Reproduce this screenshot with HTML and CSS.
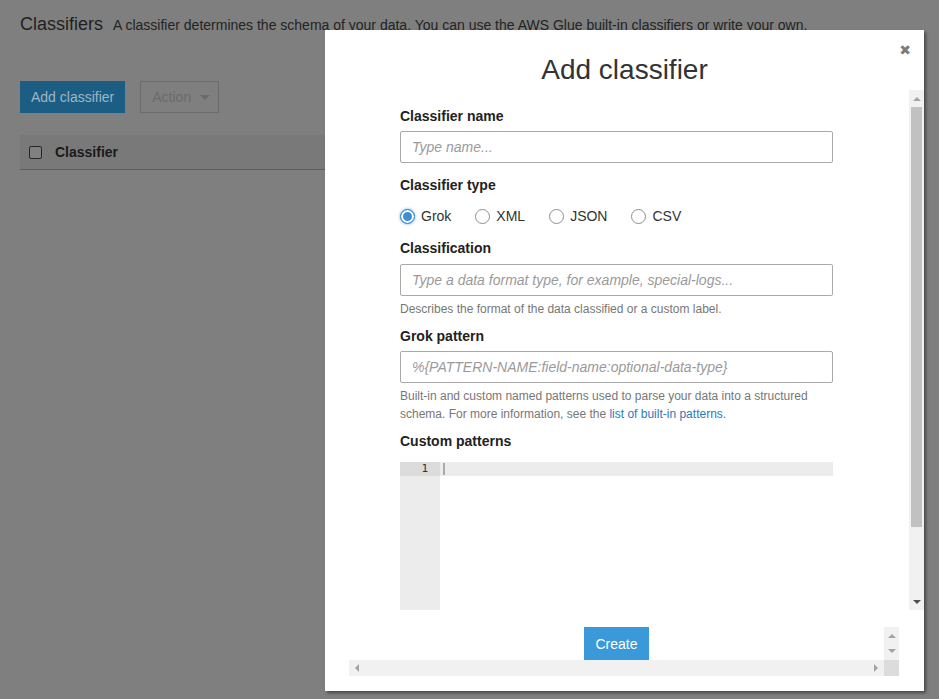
FILE: index.html
```html
<!DOCTYPE html>
<html lang="en">
<head>
<meta charset="utf-8">
<title>Add classifier</title>
<link rel="stylesheet" href="styles.css">
</head>
<body>
<div class="page">
  <header class="page-head">
    <h1 class="page-title">Classifiers</h1>
    <span class="page-desc">A classifier determines the schema of your data. You can use the AWS Glue built-in classifiers or write your own.</span>
  </header>
  <div class="toolbar">
    <button class="btn-add">Add classifier</button>
    <button class="btn-action">Action <span class="caret"></span></button>
  </div>
  <div class="table-head">
    <span class="checkbox"></span>
    <span class="col-title">Classifier</span>
  </div>
</div>

<div class="modal">
  <button class="close">&#x2716;</button>
  <h2 class="modal-title">Add classifier</h2>
  <div class="modal-body">
    <div class="scroll-view">
      <form class="form">
        <label class="field-label">Classifier name</label>
        <div class="input input-1"><span class="ph">Type name...</span></div>

        <label class="field-label lbl-type">Classifier type</label>
        <div class="radios">
          <span class="radio-opt"><span class="radio checked"></span>Grok</span>
          <span class="radio-opt"><span class="radio"></span>XML</span>
          <span class="radio-opt"><span class="radio"></span>JSON</span>
          <span class="radio-opt"><span class="radio"></span>CSV</span>
        </div>

        <label class="field-label lbl-class">Classification</label>
        <div class="input input-2"><span class="ph">Type a data format type, for example, special-logs...</span></div>
        <p class="help">Describes the format of the data classified or a custom label.</p>

        <label class="field-label lbl-grok">Grok pattern</label>
        <div class="input input-3"><span class="ph">%{PATTERN-NAME:field-name:optional-data-type}</span></div>
        <p class="help">Built-in and custom named patterns used to parse your data into a structured<br>schema. For more information, see the <a class="link">list of built-in patterns.</a></p>

        <label class="field-label lbl-custom">Custom patterns</label>
        <div class="editor">
          <div class="gutter"><div class="gutter-active">1</div></div>
          <div class="code"><div class="code-active"><span class="cursor"></span></div></div>
        </div>
      </form>
    </div>
    <div class="vscroll">
      <div class="sb-btn"><span class="tri-up dim"></span></div>
      <div class="sb-track"><div class="sb-thumb"></div></div>
      <div class="sb-btn"><span class="tri-down dark"></span></div>
    </div>
  </div>
  <div class="modal-foot">
    <div class="foot-row">
      <div class="foot-view"><button class="btn-create">Create</button></div>
      <div class="foot-vscroll">
        <span class="tri-up dim"></span>
        <span class="tri-down dim"></span>
      </div>
    </div>
    <div class="foot-row">
      <div class="foot-hscroll">
        <span class="tri-left dim"></span>
        <span class="tri-right dim"></span>
      </div>
      <div class="foot-corner"></div>
    </div>
  </div>
</div>
</body>
</html>
```

FILE: styles.css
```css
* { box-sizing: border-box; }

html, body {
  margin: 0;
  padding: 0;
}

body {
  width: 939px;
  height: 699px;
  overflow: hidden;
  background: #7f7f7f;
  font-family: "Liberation Sans", Arial, sans-serif;
  position: relative;
}

.page {
  padding: 12px 20px 0;
}

.page-head {
  display: flex;
  align-items: baseline;
  height: 24px;
}

.page-title {
  margin: 0;
  font-size: 18px;
  line-height: 24px;
  font-weight: normal;
  color: #1f1f1f;
}

.page-desc {
  margin-left: 10px;
  font-size: 14px;
  color: #232323;
}

.toolbar {
  margin-top: 45px;
  display: flex;
  gap: 15px;
}

.btn-add {
  height: 32px;
  padding: 0 11px;
  border: none;
  background: #1c5d84;
  color: #9eb6c6;
  font: 14px "Liberation Sans", Arial, sans-serif;
}

.btn-action {
  height: 32px;
  width: 79px;
  padding: 0 0 0 11px;
  border: 1px solid #6c6c6c;
  background: transparent;
  color: #6a6a6a;
  font: 14px "Liberation Sans", Arial, sans-serif;
  display: flex;
  align-items: center;
  gap: 6px;
}

.caret {
  width: 0;
  height: 0;
  border-left: 5px solid transparent;
  border-right: 5px solid transparent;
  border-top: 5px solid #6a6a6a;
  margin-left: 3px;
}

.table-head {
  margin-top: 22px;
  height: 35px;
  background: #797979;
  border-bottom: 1px solid #5c5c5c;
  display: flex;
  align-items: center;
  padding-left: 9px;
}

.checkbox {
  width: 13px;
  height: 13px;
  border: 1px solid #262626;
  border-radius: 2px;
  background: #808080;
}

.col-title {
  margin-left: 13px;
  font-weight: bold;
  font-size: 14px;
  color: #1a1a1a;
}

/* modal */
.modal {
  position: absolute;
  left: 325px;
  top: 30px;
  width: 599px;
  height: 661px;
  background: #fff;
  box-shadow: 2px 2px 3px rgba(0, 0, 0, 0.45);
}

.close {
  position: absolute;
  right: 13px;
  top: 12px;
  border: none;
  background: none;
  padding: 0;
  font-size: 14px;
  line-height: 16px;
  color: #7b7b7b;
  font-family: "DejaVu Sans", sans-serif;
}

.modal-title {
  margin: 0;
  padding-top: 20px;
  height: 60px;
  font-size: 28px;
  line-height: 40px;
  font-weight: normal;
  color: #333;
  text-align: center;
}

.modal-body {
  margin-left: 24px;
  width: 575px;
  height: 520px;
  display: flex;
}

.scroll-view {
  flex: 1;
  overflow: hidden;
}

.form {
  margin: 0 0 0 51px;
  width: 433px;
  padding: 16px 0 40px;
  display: flex;
  flex-direction: column;
}

.field-label {
  font-weight: bold;
  font-size: 14px;
  line-height: 20px;
  color: #222;
}

.lbl-type { margin-top: 12px; }
.lbl-class { margin-top: 11px; }
.lbl-grok { margin-top: 8px; }
.lbl-custom { margin-top: 8px; }

.input {
  height: 32px;
  border: 1px solid #aaa;
  border-radius: 2px;
  padding: 0 11px;
  display: flex;
  align-items: center;
}

.input-1 { margin-top: 5px; }
.input-2 { margin-top: 6px; }
.input-3 { margin-top: 5px; }

.ph {
  font-style: italic;
  font-size: 14px;
  color: #9a9a9a;
}

.radios {
  margin-top: 10px;
  height: 22px;
  display: flex;
  align-items: center;
  gap: 24px;
}

.radio-opt {
  display: flex;
  align-items: center;
  gap: 6px;
  font-size: 14px;
  color: #333;
}

.radio {
  width: 15px;
  height: 15px;
  border-radius: 50%;
  border: 1px solid #8f8f8f;
  background: #fff;
}

.radio.checked {
  border: 1px solid #3c8ed4;
  background: #3c8ed4;
  box-shadow: inset 0 0 0 2px #fff, 0 0 2px 1px rgba(60, 142, 212, 0.35);
}

.help {
  margin: 4px 0 0;
  font-size: 12px;
  line-height: 18px;
  color: #777;
}

.link {
  color: #2b7bba;
  text-decoration: none;
}

.editor {
  margin-top: 11px;
  height: 200px;
  display: flex;
}

.gutter {
  width: 40px;
  background: #ececec;
}

.gutter-active {
  height: 14px;
  background: #dcdcdc;
  text-align: right;
  padding-right: 12px;
  font: 11px/14px "DejaVu Sans Mono", monospace;
  color: #333;
}

.code {
  flex: 1;
}

.code-active {
  height: 14px;
  background: #ececec;
  padding: 1px 0 0 3px;
}

.cursor {
  display: block;
  width: 2px;
  height: 12px;
  background: #aaa;
}

/* scrollbars */
.vscroll {
  width: 15px;
  background: #f1f1f1;
  display: flex;
  flex-direction: column;
}

.sb-btn {
  height: 17px;
  display: flex;
  align-items: center;
  justify-content: center;
}

.sb-track {
  flex: 1;
}

.sb-thumb {
  margin: 0 2px;
  height: 420px;
  background: #c1c1c1;
}

.tri-up, .tri-down, .tri-left, .tri-right {
  width: 0;
  height: 0;
  display: block;
}

.tri-up {
  border-left: 4px solid transparent;
  border-right: 4px solid transparent;
  border-bottom: 4px solid #a3a3a3;
}

.tri-down {
  border-left: 4px solid transparent;
  border-right: 4px solid transparent;
  border-top: 4px solid #a3a3a3;
}

.tri-left {
  border-top: 4px solid transparent;
  border-bottom: 4px solid transparent;
  border-right: 4px solid #a3a3a3;
}

.tri-right {
  border-top: 4px solid transparent;
  border-bottom: 4px solid transparent;
  border-left: 4px solid #a3a3a3;
}

.tri-down.dark { border-top-color: #505050; }

.modal-foot {
  margin: 17px 0 0 24px;
  width: 550px;
  display: flex;
  flex-direction: column;
}

.foot-row {
  display: flex;
}

.foot-view {
  flex: 1;
  height: 33px;
  display: flex;
  justify-content: center;
}

.btn-create {
  height: 33px;
  width: 65px;
  border: none;
  background: #3a9ad9;
  color: #fff;
  font: 14px "Liberation Sans", Arial, sans-serif;
}

.foot-vscroll {
  width: 15px;
  height: 33px;
  background: #f1f1f1;
  display: flex;
  flex-direction: column;
  align-items: center;
  justify-content: space-around;
  padding: 2px 0;
}

.foot-hscroll {
  flex: 1;
  height: 16px;
  background: #f1f1f1;
  display: flex;
  align-items: center;
  justify-content: space-between;
  padding: 0 6px;
}

.foot-corner {
  width: 15px;
  height: 16px;
  background: #dcdcdc;
}
```
